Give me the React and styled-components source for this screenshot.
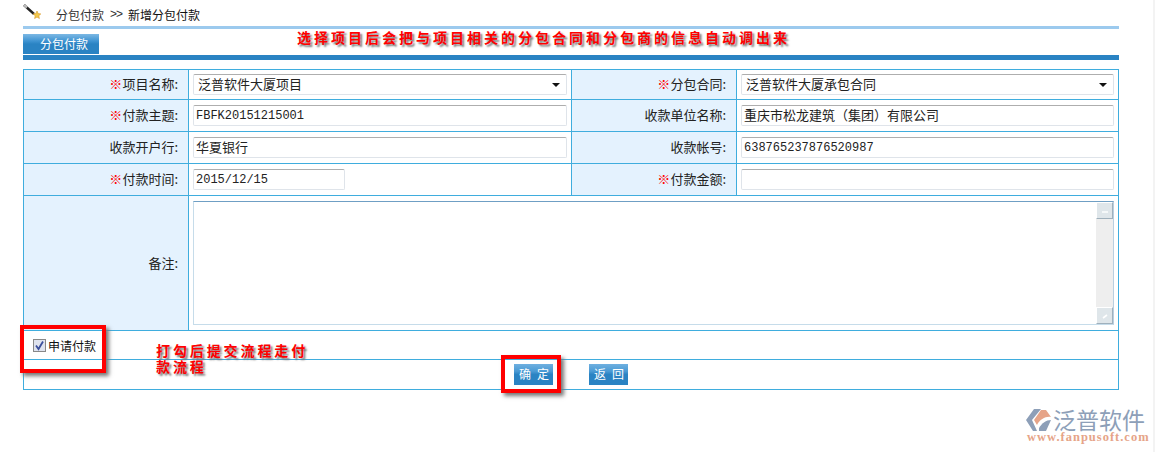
import React from "react";
import styled, { createGlobalStyle } from "styled-components";

const blue = "#2a83c3";
const line = "#3fadde";
const cjk = '"Noto Sans CJK SC", "Liberation Sans", sans-serif';
const mono = '"Liberation Mono", "Noto Sans CJK SC", monospace';

const GlobalStyle = createGlobalStyle`
  html, body {
    margin: 0;
    background: #fff;
    font-family: ${cjk};
    overflow: hidden;
  }
`;

const Page = styled.div`
  position: relative;
  width: 1155px;
  height: 452px;
  box-sizing: border-box;
  padding: 0 34px 0 23px;
  border-right: 2px solid #f3f3f3;
  overflow: hidden;
`;

const Crumbs = styled.div`
  display: flex;
  align-items: center;
  height: 26px;
  padding-top: 2px;
  box-sizing: border-box;
  font-size: 12px;
  color: #333;
`;

const CrumbIcon = styled.svg`
  width: 18px;
  height: 18px;
  margin: -6px 15px 0 0;
  flex: none;
`;

const Sep = styled.span`
  margin: 0 6px;
  font-family: "Liberation Sans", sans-serif;
  letter-spacing: -1px;
`;

const Current = styled.span`
  color: #111;
`;

const TopRule = styled.div`
  height: 3px;
  background: #9ccaee;
`;

const TabBar = styled.div`
  display: flex;
  height: 21px;
  border-bottom: 5px solid ${blue};
  margin-bottom: 9px;
  padding-top: 5px;
`;

const Tab = styled.div`
  width: 76px;
  height: 20px;
  padding-left: 17px;
  box-sizing: border-box;
  line-height: 20px;
  font-size: 12px;
  color: #fff;
  background: linear-gradient(#7cb8e4 0, #3f94d2 35%, ${blue} 50%, ${blue} 100%);
`;

const Form = styled.div`
  border: 1px solid ${line};
  width: 1096px;
  box-sizing: border-box;
`;

const Grid = styled.div`
  display: grid;
  grid-template-columns: 165px 382px 166px 1fr;
`;

const Label = styled.div`
  display: flex;
  align-items: center;
  justify-content: flex-end;
  height: ${props => props.$h || 31}px;
  padding: 0 10px 2px 0;
  box-sizing: border-box;
  background: #e4f2fe;
  font-size: 13px;
  color: #222;
  border-right: 1px solid ${line};
  border-left: ${props => (props.$inner ? `1px solid ${line}` : "none")};
  border-bottom: 1px solid ${line};
`;

const Star = styled.span`
  color: #f00;
`;

const Cell = styled.div`
  display: flex;
  align-items: center;
  height: ${props => props.$h || 31}px;
  padding-left: 4px;
  padding-right: 4px;
  box-sizing: border-box;
  border-bottom: 1px solid ${line};
  grid-column: ${props => props.$span || "auto"};
`;

const Field = styled.div`
  display: flex;
  align-items: center;
  justify-content: space-between;
  width: ${props => props.$w || "100%"};
  height: 21px;
  padding: 0 6px ${props => (props.$latin ? 0 : 2)}px ${props => (props.$select ? 4 : 2)}px;
  box-sizing: border-box;
  background: #fff;
  border: 1px solid #dfe4ea;
  border-top-color: #aeaeae;
  border-radius: 2px;
  font-family: ${props => (props.$latin ? mono : cjk)};
  font-size: ${props => (props.$latin ? 12 : 13)}px;
  color: #222;
`;

const Arrow = styled.span`
  width: 0;
  height: 0;
  margin-top: 2px;
  border-left: 4px solid transparent;
  border-right: 4px solid transparent;
  border-top: 4px solid #111;
`;

const TextArea = styled.div`
  display: flex;
  justify-content: flex-end;
  width: 100%;
  height: 124px;
  box-sizing: border-box;
  border: 1px solid #c6dcea;
  border-top-color: #6f9fc4;
  border-right-color: #b9cfe0;
`;

const Scrollbar = styled.div`
  display: flex;
  flex-direction: column;
  justify-content: space-between;
  width: 17px;
  background: #eeeeee;
`;

const ScrollBtn = styled.div`
  display: flex;
  align-items: center;
  justify-content: center;
  height: 17px;
  background: #dfe6ea;
  border: 1px solid #fff;
  border-right-color: #9fb0bc;
  border-bottom-color: #9fb0bc;
  box-sizing: border-box;
`;

const Apply = styled.label`
  display: flex;
  align-items: center;
  height: 29px;
  padding-left: 9px;
  box-sizing: border-box;
  font-size: 12px;
  color: #111;
  border-bottom: 1px solid ${line};
`;

const Check = styled.svg`
  width: 13px;
  height: 13px;
  margin-right: 2px;
`;

const Actions = styled.div`
  display: flex;
  justify-content: center;
  gap: 36px;
  height: 29px;
  padding-top: 4px;
  box-sizing: border-box;
`;

const Action = styled.div`
  width: 39px;
  height: 21px;
  line-height: 20px;
  padding-left: 5px;
  box-sizing: border-box;
  font-size: 12px;
  word-spacing: 3.3px;
  white-space: nowrap;
  color: #fff;
  background: linear-gradient(#6fb0e0 0, #4a9ad4 35%, ${blue} 50%, ${blue} 100%);
`;

const Note = styled.div`
  position: absolute;
  left: ${props => props.$x}px;
  top: ${props => props.$y}px;
  width: ${props => props.$w}px;
  font-size: 14px;
  font-weight: 700;
  line-height: ${props => props.$lh}px;
  letter-spacing: ${props => props.$gap}px;
  color: #f00;
  text-shadow: 2px 2px 2px #777;
`;

const RedBox = styled.div`
  position: absolute;
  left: ${props => props.$x}px;
  top: ${props => props.$y}px;
  width: ${props => props.$w}px;
  height: ${props => props.$h}px;
  box-sizing: border-box;
  border: 4px solid #f00;
  box-shadow: 3px 3px 4px #777;
`;

const Logo = styled.div`
  position: absolute;
  left: 1025px;
  top: 407px;
  width: 126px;
`;

const LogoTop = styled.div`
  display: flex;
  align-items: center;
  height: 25px;
  font-size: 23px;
  line-height: 25px;
  color: #8d9fb8;
  white-space: nowrap;
`;

const LogoUrl = styled.div`
  font-family: "Liberation Serif", serif;
  font-size: 12.5px;
  font-weight: 700;
  letter-spacing: 1px;
  line-height: 11px;
  color: #e6a488;
  margin-left: 2px;
  white-space: nowrap;
`;

const Req = ({ children }) => (
  <>
    <Star>※</Star>
    {children}
  </>
);

export default function App() {
  return (
    <Page>
      <GlobalStyle />
      <Crumbs>
        <CrumbIcon viewBox="0 0 18 18">
          <path d="M1 3 L11 12" stroke="#222" strokeWidth="2.4" />
          <path d="M1 3 L4 5.5" stroke="#bbb" strokeWidth="2.4" />
          <path d="M14 9 l1.2 2.6 2.6.3-2 1.8.6 2.8-2.4-1.4-2.4 1.4.6-2.8-2-1.8 2.6-.3z" fill="#f2c94c" stroke="#d8992a" strokeWidth="0.6" />
        </CrumbIcon>
        <span>分包付款</span>
        <Sep>&gt;&gt;</Sep>
        <Current>新增分包付款</Current>
      </Crumbs>
      <TopRule />
      <TabBar>
        <Tab>分包付款</Tab>
      </TabBar>
      <Form>
        <Grid>
          <Label $h={30}><Req>项目名称:</Req></Label>
          <Cell $h={30}>
            <Field $select>泛普软件大厦项目<Arrow /></Field>
          </Cell>
          <Label $h={30} $inner><Req>分包合同:</Req></Label>
          <Cell $h={30}>
            <Field $select>泛普软件大厦承包合同<Arrow /></Field>
          </Cell>

          <Label $h={32}><Req>付款主题:</Req></Label>
          <Cell $h={32}>
            <Field $latin>FBFK20151215001</Field>
          </Cell>
          <Label $h={32} $inner>收款单位名称:</Label>
          <Cell $h={32}>
            <Field>重庆市松龙建筑（集团）有限公司</Field>
          </Cell>

          <Label $h={32}>收款开户行:</Label>
          <Cell $h={32}>
            <Field>华夏银行</Field>
          </Cell>
          <Label $h={32} $inner>收款帐号:</Label>
          <Cell $h={32}>
            <Field $latin>638765237876520987</Field>
          </Cell>

          <Label $h={32}><Req>付款时间:</Req></Label>
          <Cell $h={32}>
            <Field $latin $w="152px">2015/12/15</Field>
          </Cell>
          <Label $h={32} $inner><Req>付款金额:</Req></Label>
          <Cell $h={32}>
            <Field />
          </Cell>

          <Label $h={135}>备注:</Label>
          <Cell $h={135} $span="2 / 5">
            <TextArea>
              <Scrollbar>
                <ScrollBtn>
                  <svg width="8" height="8" viewBox="0 0 8 8">
                    <path d="M1 5 H7" stroke="#fff" strokeWidth="1.4" />
                  </svg>
                </ScrollBtn>
                <ScrollBtn>
                  <svg width="8" height="8" viewBox="0 0 8 8">
                    <path d="M2 6 L6 3" stroke="#fff" strokeWidth="1.6" />
                  </svg>
                </ScrollBtn>
              </Scrollbar>
            </TextArea>
          </Cell>
        </Grid>
        <Apply>
          <Check viewBox="0 0 13 13">
            <rect x="0.5" y="0.5" width="12" height="12" fill="#dfe3ee" stroke="#888" />
            <path d="M3 6.5 L5.5 10 L10 2.5" fill="none" stroke="#3b4f9c" strokeWidth="1.8" />
          </Check>
          申请付款
        </Apply>
        <Actions>
          <Action>确 定</Action>
          <Action>返 回</Action>
        </Actions>
      </Form>

      <Note $x={297} $y={29} $w={520} $gap={3} $lh={17}>选择项目后会把与项目相关的分包合同和分包商的信息自动调出来</Note>
      <Note $x={156} $y={342} $w={156} $gap={2.9} $lh={16}>打勾后提交流程走付款流程</Note>
      <RedBox $x={20} $y={325} $w={86} $h={48} />
      <RedBox $x={501} $y={355} $w={60} $h={38} />

      <Logo>
        <LogoTop>
          <svg width="28" height="24" viewBox="0 0 28 24">
            <path d="M9 1 H16 L7 12 L12 23 H8 L1 12 Z" fill="#8d9fb8" />
            <path d="M16 2 H21 L26 9 C21 8 15 11 12 17 L9 12 Z" fill="#e6a488" />
            <path d="M14 20 C17 15 21 12 26 12 L21 23 H14 Z" fill="#8d9fb8" />
          </svg>
          泛普软件
        </LogoTop>
        <LogoUrl>www.fanpusoft.com</LogoUrl>
      </Logo>
    </Page>
  );
}
